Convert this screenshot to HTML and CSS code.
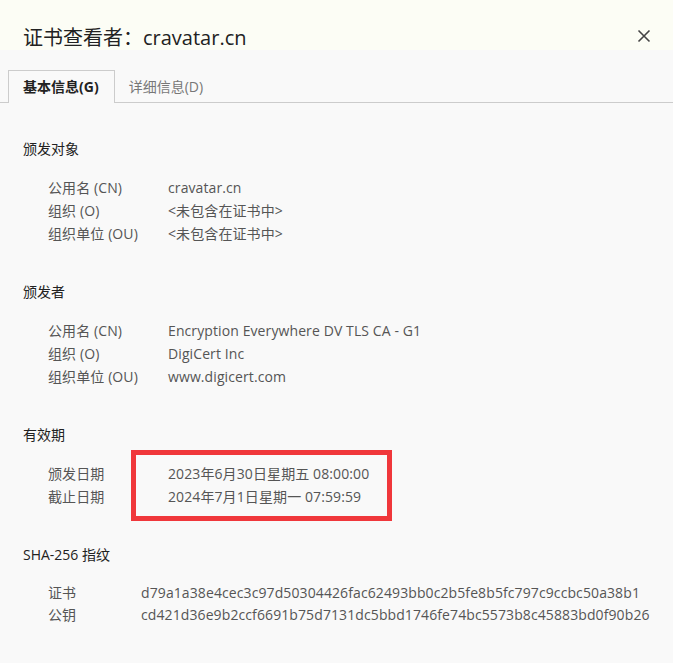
FILE: index.html
```html
<!DOCTYPE html>
<html lang="zh-CN">
<head>
  <meta charset="UTF-8">
  <meta name="viewport" content="width=device-width, initial-scale=1.0">
  <title>证书查看者：cravatar.cn</title>
  <link rel="stylesheet" href="styles.css">
</head>
<body>
  <div class="dialog-head">
    <h1>证书查看者：cravatar.cn</h1>
    <button class="close-btn" aria-label="关闭">
      <svg width="14" height="14" viewBox="0 0 14 14">
        <path d="M1.5 1.5 L12.5 12.5 M12.5 1.5 L1.5 12.5" stroke="#444" stroke-width="1.6" fill="none"/>
      </svg>
    </button>
  </div>

  <div class="tabs">
    <div class="tab active">基本信息(G)</div>
    <div class="tab">详细信息(D)</div>
  </div>

  <div class="content">
    <div class="section">
      <h2>颁发对象</h2>
      <div class="rows">
        <span class="label">公用名 (CN)</span><span>cravatar.cn</span>
        <span class="label">组织 (O)</span><span>&lt;未包含在证书中&gt;</span>
        <span class="label">组织单位 (OU)</span><span>&lt;未包含在证书中&gt;</span>
      </div>
    </div>

    <div class="section">
      <h2>颁发者</h2>
      <div class="rows">
        <span class="label">公用名 (CN)</span><span>Encryption Everywhere DV TLS CA - G1</span>
        <span class="label">组织 (O)</span><span>DigiCert Inc</span>
        <span class="label">组织单位 (OU)</span><span>www.digicert.com</span>
      </div>
    </div>

    <div class="section">
      <h2>有效期</h2>
      <div class="rows marked">
        <span class="label">颁发日期</span><span>2023年6月30日星期五 08:00:00</span>
        <span class="label">截止日期</span><span>2024年7月1日星期一 07:59:59</span>
        <div class="highlight"></div>
      </div>
    </div>

    <div class="section">
      <h2>SHA-256 指纹</h2>
      <div class="rows hash">
        <span class="label">证书</span><span>d79a1a38e4cec3c97d50304426fac62493bb0c2b5fe8b5fc797c9ccbc50a38b1</span>
        <span class="label">公钥</span><span>cd421d36e9b2ccf6691b75d7131dc5bbd1746fe74bc5573b8c45883bd0f90b26</span>
      </div>
    </div>
  </div>
</body>
</html>
```
FILE: styles.css
```css
body {
  margin: 0;
  background-color: #f9f9f9;
  font-family: "Open Sans", "Noto Sans CJK SC", sans-serif;
  color: #222;
}
.dialog-head {
  height: 50px;
  background-color: #fcfdf5;
  display: flex;
  align-items: flex-end;
  justify-content: space-between;
  padding: 0 22px 0 23px;
  box-sizing: border-box;
}
.dialog-head h1 {
  margin: 0 0 -2px 0;
  font-size: 20px;
  font-weight: normal;
  line-height: 28px;
  color: #222;
}
.close-btn {
  border: none;
  background: none;
  padding: 0;
  margin-bottom: 7px;
  width: 14px;
  height: 14px;
  display: flex;
}
.tabs {
  display: flex;
  margin-top: 20px;
  padding-left: 8px;
  border-bottom: 1px solid #ccc;
}
.tab {
  height: 31px;
  line-height: 31px;
  padding: 0 13px;
  font-size: 14px;
  color: #777;
  border: 1px solid transparent;
  border-bottom: none;
  margin-bottom: -1px;
}
.tab.active {
  padding: 0 15px 0 14px;
  font-weight: bold;
  color: #222;
  border-color: #ccc;
  background-color: #f9f9f9;
  height: 32px;
}
.content {
  padding: 36px 23px 0 23px;
}
.section {
  margin-bottom: 37px;
}
.section h2 {
  margin: 0 0 17px 0;
  font-size: 14px;
  font-weight: normal;
  line-height: 20px;
  color: #222;
}
.rows {
  display: grid;
  grid-template-columns: 120px 1fr;
  padding-left: 25px;
  font-size: 14px;
  line-height: 23px;
  letter-spacing: 0.1px;
  color: #555;
}
.rows.hash {
  grid-template-columns: 93px 1fr;
  line-height: 22px;
}
.marked {
  position: relative;
}
.highlight {
  position: absolute;
  left: 108px;
  top: -12px;
  width: 261px;
  height: 71px;
  border: 5px solid #f0373b;
  box-sizing: border-box;
}
```
